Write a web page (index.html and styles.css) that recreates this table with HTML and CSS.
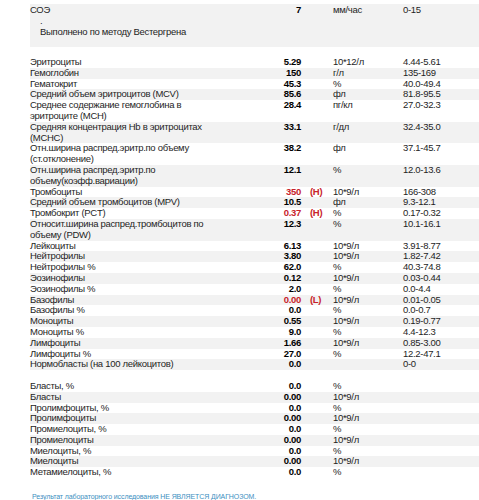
FILE: index.html
```html
<!DOCTYPE html>
<html lang="ru">
<head>
    <meta charset="UTF-8">
    <meta name="viewport" content="width=device-width, initial-scale=1.0">
    <title>Общий анализ крови</title>
    <link rel="stylesheet" href="styles.css">
</head>
<body>
    <div class="informe">
        <div class="bloque-soe">
            <table class="resultados">
                <tr><td class="nombre">СОЭ</td><td class="valor">7</td><td class="marca"></td><td class="unidad">мм/час</td><td class="norma">0-15</td></tr>
            </table>
            <div class="comentario">.<br>Выполнено по методу Вестергрена</div>
        </div>

        <table class="resultados rayado">
            <tr><td class="nombre">Эритроциты</td><td class="valor">5.29</td><td class="marca"></td><td class="unidad">10*12/л</td><td class="norma">4.44-5.61</td></tr>
            <tr><td class="nombre">Гемоглобин</td><td class="valor">150</td><td class="marca"></td><td class="unidad">г/л</td><td class="norma">135-169</td></tr>
            <tr><td class="nombre">Гематокрит</td><td class="valor">45.3</td><td class="marca"></td><td class="unidad">%</td><td class="norma">40.0-49.4</td></tr>
            <tr><td class="nombre">Средний объем эритроцитов (MCV)</td><td class="valor">85.6</td><td class="marca"></td><td class="unidad">фл</td><td class="norma">81.8-95.5</td></tr>
            <tr><td class="nombre">Среднее содержание гемоглобина в эритроците (MCH)</td><td class="valor">28.4</td><td class="marca"></td><td class="unidad">пг/кл</td><td class="norma">27.0-32.3</td></tr>
            <tr><td class="nombre">Средняя концентрация Hb в эритроцитах (MCHC)</td><td class="valor">33.1</td><td class="marca"></td><td class="unidad">г/дл</td><td class="norma">32.4-35.0</td></tr>
            <tr><td class="nombre">Отн.ширина распред.эритр.по объему (ст.отклонение)</td><td class="valor">38.2</td><td class="marca"></td><td class="unidad">фл</td><td class="norma">37.1-45.7</td></tr>
            <tr><td class="nombre">Отн.ширина распред.эритр.по объему(коэфф.вариации)</td><td class="valor">12.1</td><td class="marca"></td><td class="unidad">%</td><td class="norma">12.0-13.6</td></tr>
            <tr class="alto"><td class="nombre">Тромбоциты</td><td class="valor">350</td><td class="marca">(H)</td><td class="unidad">10*9/л</td><td class="norma">166-308</td></tr>
            <tr><td class="nombre">Средний объем тромбоцитов (MPV)</td><td class="valor">10.5</td><td class="marca"></td><td class="unidad">фл</td><td class="norma">9.3-12.1</td></tr>
            <tr class="alto"><td class="nombre">Тромбокрит (PCT)</td><td class="valor">0.37</td><td class="marca">(H)</td><td class="unidad">%</td><td class="norma">0.17-0.32</td></tr>
            <tr><td class="nombre">Относит.ширина распред.тромбоцитов по объему (PDW)</td><td class="valor">12.3</td><td class="marca"></td><td class="unidad">%</td><td class="norma">10.1-16.1</td></tr>
            <tr><td class="nombre">Лейкоциты</td><td class="valor">6.13</td><td class="marca"></td><td class="unidad">10*9/л</td><td class="norma">3.91-8.77</td></tr>
            <tr><td class="nombre">Нейтрофилы</td><td class="valor">3.80</td><td class="marca"></td><td class="unidad">10*9/л</td><td class="norma">1.82-7.42</td></tr>
            <tr><td class="nombre">Нейтрофилы %</td><td class="valor">62.0</td><td class="marca"></td><td class="unidad">%</td><td class="norma">40.3-74.8</td></tr>
            <tr><td class="nombre">Эозинофилы</td><td class="valor">0.12</td><td class="marca"></td><td class="unidad">10*9/л</td><td class="norma">0.03-0.44</td></tr>
            <tr><td class="nombre">Эозинофилы %</td><td class="valor">2.0</td><td class="marca"></td><td class="unidad">%</td><td class="norma">0.0-4.4</td></tr>
            <tr class="alto"><td class="nombre">Базофилы</td><td class="valor">0.00</td><td class="marca">(L)</td><td class="unidad">10*9/л</td><td class="norma">0.01-0.05</td></tr>
            <tr><td class="nombre">Базофилы %</td><td class="valor">0.0</td><td class="marca"></td><td class="unidad">%</td><td class="norma">0.0-0.7</td></tr>
            <tr><td class="nombre">Моноциты</td><td class="valor">0.55</td><td class="marca"></td><td class="unidad">10*9/л</td><td class="norma">0.19-0.77</td></tr>
            <tr><td class="nombre">Моноциты %</td><td class="valor">9.0</td><td class="marca"></td><td class="unidad">%</td><td class="norma">4.4-12.3</td></tr>
            <tr><td class="nombre">Лимфоциты</td><td class="valor">1.66</td><td class="marca"></td><td class="unidad">10*9/л</td><td class="norma">0.85-3.00</td></tr>
            <tr><td class="nombre">Лимфоциты %</td><td class="valor">27.0</td><td class="marca"></td><td class="unidad">%</td><td class="norma">12.2-47.1</td></tr>
            <tr><td class="nombre">Нормобласты (на 100 лейкоцитов)</td><td class="valor">0.0</td><td class="marca"></td><td class="unidad"></td><td class="norma">0-0</td></tr>
        </table>

        <table class="resultados rayado segundo">
            <tr><td class="nombre">Бласты, %</td><td class="valor">0.0</td><td class="marca"></td><td class="unidad">%</td><td class="norma"></td></tr>
            <tr><td class="nombre">Бласты</td><td class="valor">0.00</td><td class="marca"></td><td class="unidad">10*9/л</td><td class="norma"></td></tr>
            <tr><td class="nombre">Пролимфоциты, %</td><td class="valor">0.0</td><td class="marca"></td><td class="unidad">%</td><td class="norma"></td></tr>
            <tr><td class="nombre">Пролимфоциты</td><td class="valor">0.00</td><td class="marca"></td><td class="unidad">10*9/л</td><td class="norma"></td></tr>
            <tr><td class="nombre">Промиелоциты, %</td><td class="valor">0.0</td><td class="marca"></td><td class="unidad">%</td><td class="norma"></td></tr>
            <tr><td class="nombre">Промиелоциты</td><td class="valor">0.00</td><td class="marca"></td><td class="unidad">10*9/л</td><td class="norma"></td></tr>
            <tr><td class="nombre">Миелоциты, %</td><td class="valor">0.0</td><td class="marca"></td><td class="unidad">%</td><td class="norma"></td></tr>
            <tr><td class="nombre">Миелоциты</td><td class="valor">0.00</td><td class="marca"></td><td class="unidad">10*9/л</td><td class="norma"></td></tr>
            <tr><td class="nombre">Метамиелоциты, %</td><td class="valor">0.0</td><td class="marca"></td><td class="unidad">%</td><td class="norma"></td></tr>
        </table>

        <p class="aviso">Результат лабораторного исследования НЕ ЯВЛЯЕТСЯ ДИАГНОЗОМ.</p>
    </div>
</body>
</html>
```

FILE: styles.css
```css
/* Бланк результатов анализа крови */
body {
    margin: 0;
    background-color: #ffffff;
    color: #1e1e1e;
    font-family: 'Liberation Sans', Arial, sans-serif;
    font-size: 9.5px;
    letter-spacing: -0.3px;
    overflow: hidden;
}

.informe {
    padding: 4px 0 0 30px;
}

/* Верхний блок СОЭ с комментарием */
.bloque-soe {
    background-color: #f2f2f2;
    width: 470px;
    height: 42px;
    padding-top: 1px;
    margin-bottom: 10px;
}

.comentario {
    padding-left: 10px;
    line-height: 10.8px;
}

.resultados {
    width: 470px;
    border-collapse: collapse;
    table-layout: fixed;
}

.resultados td {
    padding: 0;
    line-height: 10.8px;
    vertical-align: top;
}

.nombre {
    width: 190px;
}

.valor {
    width: 81px;
    text-align: right;
    font-weight: bold;
    color: #000000;
}

.marca {
    width: 23px;
    padding-left: 9px !important;
    font-weight: bold;
    color: #c8232a;
}

.unidad {
    width: 70px;
}

.alto .valor {
    color: #c8232a;
}

.rayado tr:nth-child(even) {
    background-color: #f2f2f2;
}

.segundo {
    margin-top: 10.8px;
}

.aviso {
    margin: 15px 0 0 2px;
    font-size: 7px;
    letter-spacing: -0.1px;
    line-height: 8px;
    color: #3d8fbf;
}
```
